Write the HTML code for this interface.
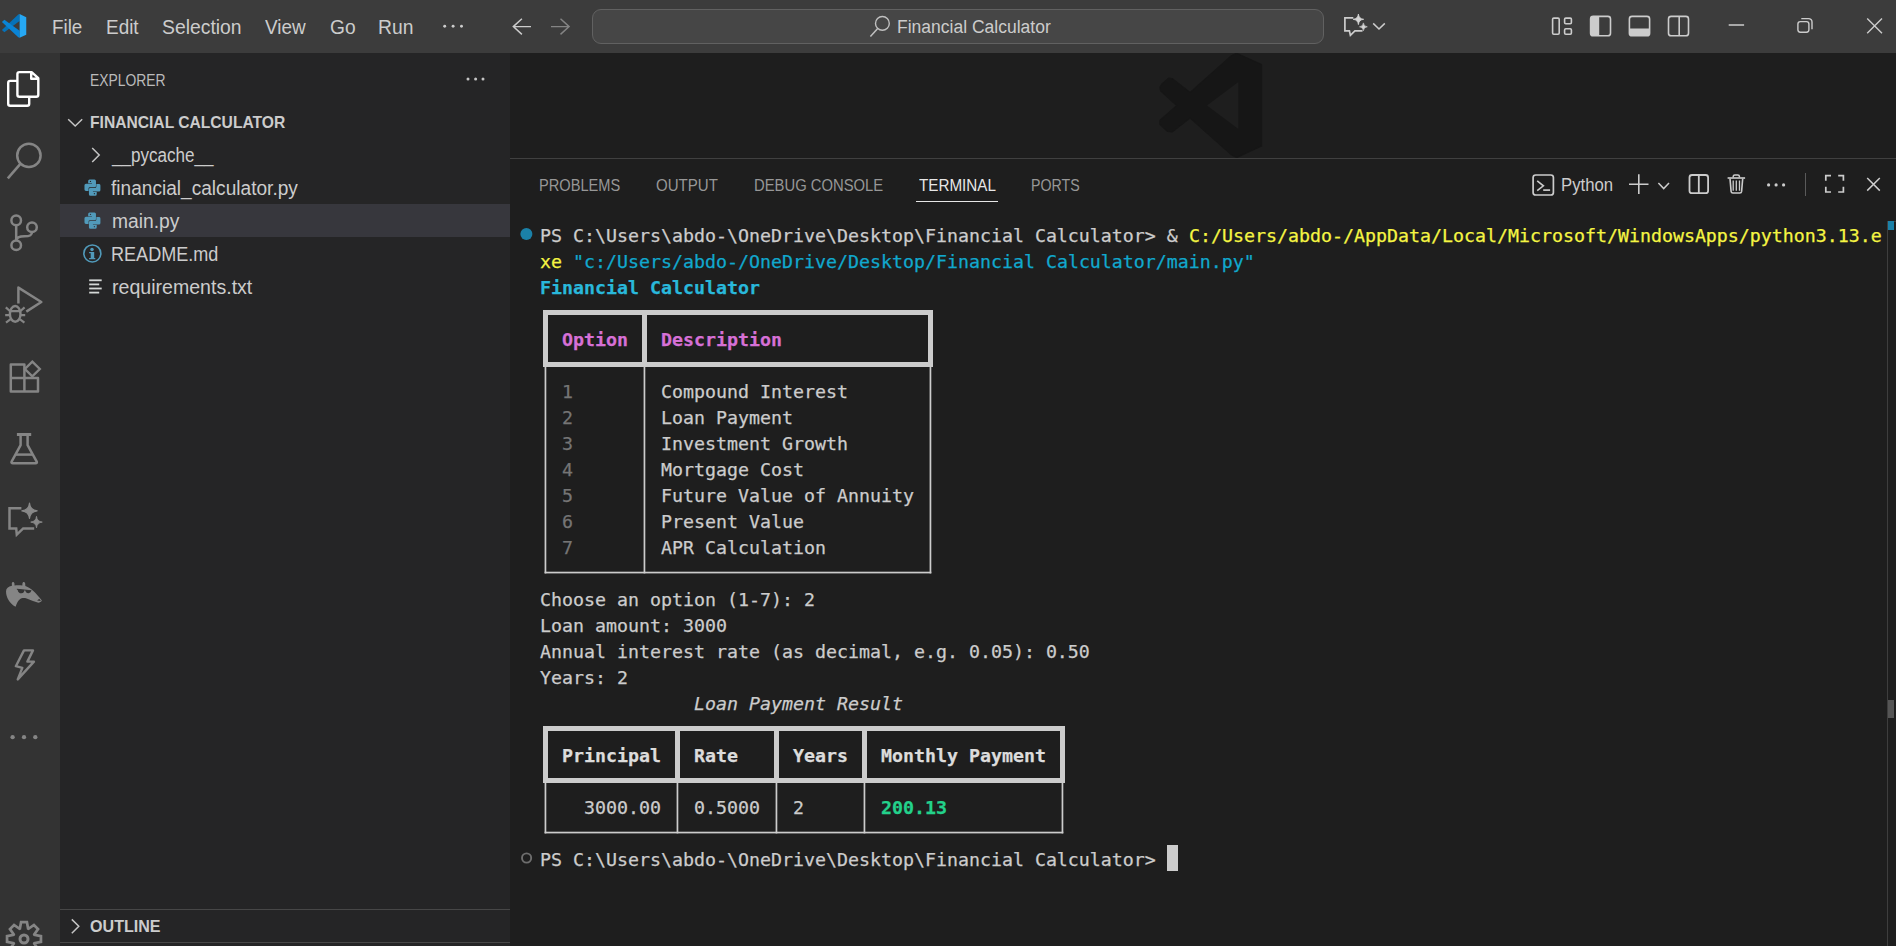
<!DOCTYPE html>
<html lang="en"><head><meta charset="utf-8"><title>Financial Calculator - Visual Studio Code</title>
<style>
html,body{margin:0;padding:0}
body{width:1896px;height:946px;overflow:hidden;position:relative;background:#1e1e1e;font-family:"Liberation Sans", "DejaVu Sans", sans-serif;}
.abs{position:absolute}
.t{position:absolute;white-space:pre;line-height:1;font-family:"Liberation Sans", "DejaVu Sans", sans-serif;transform-origin:0 0;}
.m{position:absolute;white-space:pre;height:26px;line-height:26px;font-family:"DejaVu Sans Mono", "Liberation Mono", monospace;font-size:18.27px;letter-spacing:0.0005px;-webkit-text-stroke:0.25px;}
#titlebar{left:0;top:0;width:1896px;height:53px;background:#3c3c3c}
#activity{left:0;top:53px;width:60px;height:893px;background:#333333}
#sidebar{left:60px;top:53px;width:450px;height:893px;background:#252526}
#editor{left:510px;top:53px;width:1386px;height:105px;background:#1e1e1e}
#panel{left:510px;top:158px;width:1386px;height:788px;background:#1e1e1e;border-top:1px solid #404040;box-sizing:border-box}
#cmd{left:592px;top:9px;width:732px;height:35px;box-sizing:border-box;border:1px solid #616161;border-radius:9px;background:#464646}
#selrow{left:60px;top:204px;width:450px;height:33px;background:#37373d}
svg{position:absolute;left:0;top:0;overflow:visible}

</style></head><body>
<div class="abs" id="titlebar"></div>
<div class="abs" id="activity"></div>
<div class="abs" id="sidebar"></div>
<div class="abs" id="editor"></div>
<div class="abs" id="panel"></div>
<div class="abs" id="cmd"></div>
<div class="abs" id="selrow"></div>
<div class="abs" style="left:60px;top:909px;width:450px;height:1px;background:#474747"></div>
<div class="abs" style="left:60px;top:942px;width:450px;height:1px;background:#474747"></div>
<div class="abs" style="left:916px;top:200.5px;width:82px;height:1.5px;background:#e7e7e7"></div>
<div class="abs" style="left:1805px;top:173px;width:1px;height:23px;background:#5a5a5a"></div>
<div class="abs" style="left:1887px;top:221px;width:1px;height:725px;background:#3e3e3e"></div>
<div class="abs" style="left:1888px;top:221px;width:6px;height:9px;background:#1b81a8"></div>
<div class="abs" style="left:1894px;top:221px;width:2px;height:1px;background:#3e3e3e"></div>
<div class="abs" style="left:1888px;top:700px;width:6px;height:18px;background:#555555"></div>
<div class="abs" style="left:1167px;top:845px;width:11px;height:26px;background:#cccccc"></div>
<svg width="1896" height="946" viewBox="0 0 1896 946" fill="none" stroke-linecap="butt" stroke-linejoin="miter">
<clipPath id="edclip"><rect x="510" y="53" width="1386" height="105"/></clipPath>
<g clip-path="url(#edclip)"><path d="M1236.6 53.3 L1261.6 64.5 L1261.6 145.9 L1236.6 157.6 L1231.4 154.7 L1190.1 118.0 L1172.1 132.0 L1167.4 131.4 L1159.9 124.4 L1159.9 120.9 L1160.5 119.8 L1176.7 105.6 L1160.5 90.7 L1159.9 87.2 L1161.6 84.3 L1168.6 78.1 L1172.1 78.5 L1190.1 92.4 L1231.4 55.8Z" fill="#161616" stroke="#161616" stroke-width="1.2" stroke-linejoin="round"/><path d="M1207.0 105.6 L1238.4 82.0 L1238.4 129.1Z" fill="#1e1e1e"/></g>
<polygon points="1.90,29.99 4.38,32.16 19.60,20.94 19.60,14.09 18.26,14.47" fill="#0672b9"/>
<polygon points="1.90,21.89 4.38,19.80 19.60,30.83 19.60,37.87 18.26,37.30" fill="#0a84d6"/>
<polygon points="19.60,14.09 26.26,17.13 26.26,34.64 19.60,37.87" fill="#26a8f4"/>
<circle cx="444.7" cy="26.2" r="1.45" fill="#cccccc"/>
<circle cx="453.1" cy="26.2" r="1.45" fill="#cccccc"/>
<circle cx="461.5" cy="26.2" r="1.45" fill="#cccccc"/>
<path d="M531 26.6H513.90 M521.90 18.8L513.30 26.6L521.90 34.4" stroke="#cccccc" stroke-width="1.45"/>
<path d="M551 26.6H568.50 M560.50 18.8L569.10 26.6L560.50 34.4" stroke="#848484" stroke-width="1.45"/>
<circle cx="882.4" cy="23.4" r="6.9" stroke="#c0c0c0" stroke-width="1.4"/>
<path d="M877.7 28.6L870.4 36.6" stroke="#c0c0c0" stroke-width="1.5"/>
<path d="M1353.3 17.9H1344.9V30.9H1349.4L1350.4 35.3L1354.9 30.9H1362.5" stroke="#cccccc" stroke-width="1.7" stroke-linejoin="miter"/>
<path d="M1358.4 14.00 Q1358.88 18.82 1363.70 19.3 Q1358.88 19.78 1358.4 24.60 Q1357.92 19.78 1353.10 19.3 Q1357.92 18.82 1358.4 14.00Z" fill="#d4d4d4" stroke="#d4d4d4" stroke-width="0.80" stroke-linejoin="round"/>
<path d="M1363.4 22.89 Q1363.75 26.45 1367.31 26.8 Q1363.75 27.15 1363.4 30.71 Q1363.05 27.15 1359.49 26.8 Q1363.05 26.45 1363.4 22.89Z" fill="#d4d4d4" stroke="#d4d4d4" stroke-width="0.59" stroke-linejoin="round"/>
<path d="M1373.2 23.4L1379 29L1384.8 23.4" stroke="#cccccc" stroke-width="1.5"/>
<rect x="1552.6" y="18.1" width="6.6" height="16.2" rx="1.2" stroke="#cccccc" stroke-width="1.6"/>
<rect x="1564.6" y="18.1" width="6.8" height="5.6" rx="1.2" stroke="#cccccc" stroke-width="1.6"/>
<rect x="1564.6" y="28.7" width="6.8" height="5.6" rx="1.2" stroke="#cccccc" stroke-width="1.6"/>
<rect x="1590.6" y="16.4" width="19.9" height="19.4" rx="2.6" stroke="#cccccc" stroke-width="1.6"/>
<path d="M1593 16.4H1599.2V35.8H1593A2.4 2.4 0 0 1 1590.6 33.4V18.8A2.4 2.4 0 0 1 1593 16.4Z" fill="#cccccc"/>
<rect x="1629.4" y="16.4" width="20.2" height="19.4" rx="2.6" stroke="#cccccc" stroke-width="1.6"/>
<path d="M1629.4 28.6H1649.6V33.4A2.4 2.4 0 0 1 1647.2 35.8H1631.8A2.4 2.4 0 0 1 1629.4 33.4Z" fill="#cccccc"/>
<rect x="1668.5" y="16.4" width="20" height="19.4" rx="2.6" stroke="#cccccc" stroke-width="1.6"/>
<path d="M1679.2 16.4V35.8" stroke="#cccccc" stroke-width="1.6"/>
<path d="M1728.7 25H1744.1" stroke="#cccccc" stroke-width="1.5"/>
<rect x="1797.9" y="21.6" width="11" height="10.6" rx="2.4" stroke="#cccccc" stroke-width="1.4"/>
<path d="M1801.3 18.6H1808.6A3.4 3.4 0 0 1 1812 22V29.2" stroke="#cccccc" stroke-width="1.4"/>
<path d="M1867.2 18.4L1882 33.2M1882 18.4L1867.2 33.2" stroke="#cccccc" stroke-width="1.4"/>
<path d="M31.6 72.1H19.4A2 2 0 0 0 17.4 74.1V94.8A2 2 0 0 0 19.4 96.8H36.3A2 2 0 0 0 38.3 94.8V78.2Z M31.2 72.1V78.7H38.3" stroke="#ffffff" stroke-width="2.4" stroke-linejoin="round"/>
<path d="M17.4 80.9H10.2A2 2 0 0 0 8.2 82.9V103.8A2 2 0 0 0 10.2 105.8H27.2A2 2 0 0 0 29.2 103.8V96.8" stroke="#ffffff" stroke-width="2.4"/>
<circle cx="28.9" cy="155.4" r="11.7" stroke="#858585" stroke-width="2.5"/>
<path d="M20.6 163.6L7.8 178.4" stroke="#858585" stroke-width="2.6"/>
<circle cx="16.2" cy="220.4" r="4.8" stroke="#858585" stroke-width="2.5"/>
<circle cx="16.2" cy="245.2" r="4.8" stroke="#858585" stroke-width="2.5"/>
<circle cx="32" cy="227.2" r="4.8" stroke="#858585" stroke-width="2.5"/>
<path d="M16.2 225.2V240.4 M32 232C32 235.6 29.4 236.3 24.5 236.3C19 236.3 16.6 237.6 16.2 240.6" stroke="#858585" stroke-width="2.5"/>
<path d="M18.4 303.6V287.6L41.3 302L26.3 311.6" stroke="#858585" stroke-width="2.5" stroke-linejoin="round"/>
<ellipse cx="15.2" cy="313.9" rx="5.3" ry="7.9" stroke="#858585" stroke-width="2.4"/>
<path d="M10 311.2H20.4 M9.9 311L5.8 307.4 M20.5 311L24.6 307.4 M9.6 315.2H5.2 M20.8 315.2H25.2 M10.6 319.2L6 322.6 M19.8 319.2L24.4 322.6" stroke="#858585" stroke-width="2.2"/>
<path d="M24.4 378V364.5H10.8V391.4H38V378H10.8 M24.4 378V391.4" stroke="#858585" stroke-width="2.5" stroke-linejoin="round"/>
<path d="M32.3 361.6L39.8 369L32.3 376.4L24.9 369Z" stroke="#858585" stroke-width="2.4" stroke-linejoin="miter"/>
<path d="M16.9 434.5H31.2" stroke="#858585" stroke-width="3"/>
<path d="M20.6 435V445.2L11.6 461.6Q11 463.2 12.8 463.2H35.6Q37.4 463.2 36.7 461.6L27.6 445.2V435" stroke="#858585" stroke-width="2.5" stroke-linejoin="round"/>
<path d="M15.8 454.6H32.4" stroke="#858585" stroke-width="2.5"/>
<path d="M21.4 508.2H9.5V528.4H16.2L16.8 534.6L23.2 528.4H34.2" stroke="#858585" stroke-width="2.5" stroke-linejoin="miter"/>
<path d="M29.5 503.08 Q30.19 510.11 37.22 510.8 Q30.19 511.49 29.5 518.52 Q28.81 511.49 21.78 510.8 Q28.81 510.11 29.5 503.08Z" fill="#888888" stroke="#888888" stroke-width="1.16" stroke-linejoin="round"/>
<path d="M36.5 516.33 Q37.02 521.58 42.27 522.1 Q37.02 522.62 36.5 527.87 Q35.98 522.62 30.73 522.1 Q35.98 521.58 36.5 516.33Z" fill="#888888" stroke="#888888" stroke-width="0.87" stroke-linejoin="round"/>
<path d="M6.02 591.54 C6.02 588.36 8.24 586.46 11.92 585.83 L11.79 583.61 C11.79 581.52 14.33 581.52 14.46 583.61 L14.58 585.51 C17.12 585.19 19.66 585.19 22.32 585.57 L22.45 583.61 C22.45 581.52 24.98 581.52 25.17 583.61 L25.36 585.95 C29.80 587.10 36.14 592.80 41.85 600.41 C41.22 601.68 39.63 602.63 38.36 602.63 L32.97 601.05 L26.63 598.51 C24.10 597.88 21.56 597.88 19.66 599.46 C17.76 601.05 16.80 603.58 15.54 606.75 C9.51 603.58 6.02 597.24 6.02 591.54Z" fill="#858585"/>
<path d="M16.87 588.87 L31.33 590.14 L31.33 591.03 L16.87 589.76 Z" fill="#333333"/>
<path d="M17.63 589.38 C17.88 592.80 20.29 593.56 21.56 593.31 C23.59 592.93 24.35 591.54 24.35 589.89 Z" fill="#333333"/>
<path d="M25.24 590.01 C25.49 592.49 27.27 593.44 28.54 593.18 C30.31 592.80 31.07 591.85 31.20 590.52 Z" fill="#333333"/>
<path d="M37.10 600.41 L39.32 598.83 L40.90 601.05 Z" fill="#333333"/>
<path d="M23.97 650.35 L32.97 650.35 L27.39 661.63 L33.93 661.63 L17.76 679.39 L22.32 667.85 L15.85 666.20Z" stroke="#858585" stroke-width="2.4" stroke-linejoin="round"/>
<circle cx="12.6" cy="737.2" r="2.15" fill="#858585"/>
<circle cx="24" cy="737.2" r="2.15" fill="#858585"/>
<circle cx="35.3" cy="737.2" r="2.15" fill="#858585"/>
<path d="M21.09 922.05 L26.91 922.05 L28.08 928.57 L28.49 928.74 L33.93 924.96 L38.04 929.07 L34.26 934.51 L34.43 934.92 L40.95 936.09 L40.95 941.91 L34.43 943.08 L34.26 943.49 L38.04 948.93 L33.93 953.04 L28.49 949.26 L28.08 949.43 L26.91 955.95 L21.09 955.95 L19.92 949.43 L19.51 949.26 L14.07 953.04 L9.96 948.93 L13.74 943.49 L13.57 943.08 L7.05 941.91 L7.05 936.09 L13.57 934.92 L13.74 934.51 L9.96 929.07 L14.07 924.96 L19.51 928.74 L19.92 928.57Z" stroke="#858585" stroke-width="2.7" stroke-linejoin="miter"/>
<circle cx="24" cy="939" r="4" stroke="#858585" stroke-width="3"/>
<circle cx="468.0" cy="79" r="1.5" fill="#c5c5c5"/>
<circle cx="475.6" cy="79" r="1.5" fill="#c5c5c5"/>
<circle cx="483.0" cy="79" r="1.5" fill="#c5c5c5"/>
<path d="M68.2 119.2L75.2 126L82.2 119.2" stroke="#c5c5c5" stroke-width="1.5"/>
<path d="M92.2 148L99.2 155L92.2 162" stroke="#c5c5c5" stroke-width="1.5"/>
<path d="M71.8 919.4L78.8 926.3L71.8 933.2" stroke="#c5c5c5" stroke-width="1.5"/>
<g transform="translate(78 172) scale(0.03175)"><path d="M320 285Q320 235 368 235L518 235Q566 235 566 285L566 438Q566 482 522 482L372 482Q332 482 332 522L332 602L252 602Q204 602 204 555L204 418Q204 370 252 370L440 370L440 352L320 352Z" fill="#519aba"/><circle cx="393" cy="298" r="20" fill="#252526"/><g transform="rotate(180 455 491)"><path d="M320 285Q320 235 368 235L518 235Q566 235 566 285L566 438Q566 482 522 482L372 482Q332 482 332 522L332 602L252 602Q204 602 204 555L204 418Q204 370 252 370L440 370L440 352L320 352Z" fill="#519aba"/><circle cx="393" cy="298" r="20" fill="#252526"/></g></g>
<g transform="translate(78 205) scale(0.03175)"><path d="M320 285Q320 235 368 235L518 235Q566 235 566 285L566 438Q566 482 522 482L372 482Q332 482 332 522L332 602L252 602Q204 602 204 555L204 418Q204 370 252 370L440 370L440 352L320 352Z" fill="#519aba"/><circle cx="393" cy="298" r="20" fill="#37373d"/><g transform="rotate(180 455 491)"><path d="M320 285Q320 235 368 235L518 235Q566 235 566 285L566 438Q566 482 522 482L372 482Q332 482 332 522L332 602L252 602Q204 602 204 555L204 418Q204 370 252 370L440 370L440 352L320 352Z" fill="#519aba"/><circle cx="393" cy="298" r="20" fill="#37373d"/></g></g>
<circle cx="92.35" cy="253.45" r="8.5" stroke="#519aba" stroke-width="1.6"/>
<circle cx="92" cy="249.4" r="1.75" fill="#519aba"/>
<path d="M89.1 252.1H94.2V258H95.3V259.3H89.1V258H90.7V253.2H89.1Z" fill="#519aba"/>
<rect x="89.2" y="279.40000000000003" width="12.5" height="1.8" fill="#d4d7d6"/>
<rect x="89.2" y="283.5" width="10" height="1.8" fill="#d4d7d6"/>
<rect x="89.2" y="287.6" width="12.5" height="1.8" fill="#d4d7d6"/>
<rect x="89.2" y="291.70000000000005" width="10" height="1.8" fill="#d4d7d6"/>
<rect x="1533.1" y="175" width="20.3" height="20" rx="2.6" stroke="#cccccc" stroke-width="1.7"/>
<path d="M1537.2 180.8L1543.4 185.8L1537.2 190.7" stroke="#cccccc" stroke-width="1.6"/>
<path d="M1543.2 190.1H1550.1" stroke="#cccccc" stroke-width="1.7"/>
<path d="M1629 184.2H1648.5M1638.8 174.3V194" stroke="#cccccc" stroke-width="1.6"/>
<path d="M1658.4 183L1663.7 188.6L1669 183" stroke="#cccccc" stroke-width="1.5"/>
<rect x="1689.5" y="175" width="18.6" height="18.2" rx="2.5" stroke="#cccccc" stroke-width="1.8"/>
<path d="M1698.8 175V193.2" stroke="#cccccc" stroke-width="1.8"/>
<path d="M1727.6 178H1745.1" stroke="#cccccc" stroke-width="1.6"/>
<path d="M1733.2 177.6V176.4A1.6 1.6 0 0 1 1734.8 174.9H1737.8A1.6 1.6 0 0 1 1739.4 176.4V177.6" stroke="#cccccc" stroke-width="1.5"/>
<path d="M1730 178.6L1731.1 191.4A1.8 1.8 0 0 0 1732.9 193H1739.8A1.8 1.8 0 0 0 1741.6 191.4L1742.7 178.6" stroke="#cccccc" stroke-width="1.6"/>
<path d="M1733.2 180.4V190.8M1736.3 180.4V190.8M1739.5 180.4V190.8" stroke="#cccccc" stroke-width="1.3"/>
<circle cx="1768.6" cy="184.9" r="1.6" fill="#cccccc"/>
<circle cx="1776.1" cy="184.9" r="1.6" fill="#cccccc"/>
<circle cx="1783.6" cy="184.9" r="1.6" fill="#cccccc"/>
<path d="M1825.8 180.79999999999998V175.6H1831.0 M1838.2 175.6H1843.4V180.79999999999998 M1843.4 186.8V192H1838.2 M1831.0 192H1825.8V186.8" stroke="#cccccc" stroke-width="1.7"/>
<path d="M1867.2 178L1879.8 190.6M1879.8 178L1867.2 190.6" stroke="#cccccc" stroke-width="1.5"/>
<circle cx="526.4" cy="234" r="6" fill="#1b81a8"/>
<circle cx="526.6" cy="858" r="4.6" stroke="#6e6e6e" stroke-width="1.9"/>
</svg>
<svg width="1896" height="946" viewBox="0 0 1896 946">
<rect x="543.00" y="310.00" width="390.00" height="5.00" fill="#cccccc"/>
<rect x="543.00" y="362.00" width="390.00" height="5.00" fill="#cccccc"/>
<rect x="543.00" y="310.00" width="5.00" height="57.00" fill="#cccccc"/>
<rect x="642.00" y="310.00" width="5.00" height="57.00" fill="#cccccc"/>
<rect x="928.00" y="310.00" width="5.00" height="57.00" fill="#cccccc"/>
<rect x="544.60" y="367.00" width="1.70" height="206.40" fill="#cccccc"/>
<rect x="643.60" y="367.00" width="1.70" height="206.40" fill="#cccccc"/>
<rect x="929.60" y="367.00" width="1.70" height="206.40" fill="#cccccc"/>
<rect x="544.60" y="571.70" width="386.70" height="1.70" fill="#cccccc"/>
<rect x="543.00" y="726.00" width="522.00" height="5.00" fill="#cccccc"/>
<rect x="543.00" y="778.00" width="522.00" height="5.00" fill="#cccccc"/>
<rect x="543.00" y="726.00" width="5.00" height="57.00" fill="#cccccc"/>
<rect x="675.00" y="726.00" width="5.00" height="57.00" fill="#cccccc"/>
<rect x="774.00" y="726.00" width="5.00" height="57.00" fill="#cccccc"/>
<rect x="862.00" y="726.00" width="5.00" height="57.00" fill="#cccccc"/>
<rect x="1060.00" y="726.00" width="5.00" height="57.00" fill="#cccccc"/>
<rect x="544.60" y="783.00" width="1.70" height="50.40" fill="#cccccc"/>
<rect x="676.60" y="783.00" width="1.70" height="50.40" fill="#cccccc"/>
<rect x="775.60" y="783.00" width="1.70" height="50.40" fill="#cccccc"/>
<rect x="863.60" y="783.00" width="1.70" height="50.40" fill="#cccccc"/>
<rect x="1061.60" y="783.00" width="1.70" height="50.40" fill="#cccccc"/>
<rect x="544.60" y="831.70" width="518.70" height="1.70" fill="#cccccc"/>
</svg>
<div class="t" id="m_file" style="left:51.72px;top:18px;font-size:19.5px;font-weight:400;transform:scaleX(0.9653);color:#cccccc">File</div>
<div class="t" id="m_edit" style="left:105.80px;top:18px;font-size:19.5px;font-weight:400;transform:scaleX(0.9707);color:#cccccc">Edit</div>
<div class="t" id="m_sel" style="left:161.52px;top:18px;font-size:19.5px;font-weight:400;transform:scaleX(0.9924);color:#cccccc">Selection</div>
<div class="t" id="m_view" style="left:265.01px;top:18px;font-size:19.5px;font-weight:400;transform:scaleX(0.9701);color:#cccccc">View</div>
<div class="t" id="m_go" style="left:329.99px;top:18px;font-size:19.5px;font-weight:400;transform:scaleX(0.9823);color:#cccccc">Go</div>
<div class="t" id="m_run" style="left:378.12px;top:18px;font-size:19.5px;font-weight:400;transform:scaleX(0.9897);color:#cccccc">Run</div>
<div class="t" id="cc" style="left:897.25px;top:18px;font-size:18px;font-weight:400;transform:scaleX(0.9728);color:#cccccc">Financial Calculator</div>
<div class="t" id="s_exp" style="left:89.74px;top:72px;font-size:16.5px;font-weight:400;transform:scaleX(0.8407);color:#bbbbbb">EXPLORER</div>
<div class="t" id="s_fc" style="left:90.04px;top:114px;font-size:16.5px;font-weight:700;transform:scaleX(0.9468);color:#cccccc">FINANCIAL CALCULATOR</div>
<div class="t" id="f_pyc" style="left:111.51px;top:146px;font-size:19.5px;font-weight:400;transform:scaleX(0.8757);color:#cccccc">__pycache__</div>
<div class="t" id="f_fin" style="left:110.87px;top:179px;font-size:19.5px;font-weight:400;transform:scaleX(0.9794);color:#cccccc">financial_calculator.py</div>
<div class="t" id="f_main" style="left:111.72px;top:212px;font-size:19.5px;font-weight:400;transform:scaleX(0.9881);color:#cccccc">main.py</div>
<div class="t" id="f_read" style="left:110.85px;top:245px;font-size:19.5px;font-weight:400;transform:scaleX(0.9264);color:#cccccc">README.md</div>
<div class="t" id="f_req" style="left:111.57px;top:278px;font-size:19.5px;font-weight:400;transform:scaleX(1.0036);color:#cccccc">requirements.txt</div>
<div class="t" id="s_out" style="left:90.14px;top:918px;font-size:16.5px;font-weight:700;transform:scaleX(0.9750);color:#cccccc">OUTLINE</div>
<div class="t" id="p_prob" style="left:538.78px;top:177px;font-size:16.5px;font-weight:400;transform:scaleX(0.8867);color:#979797">PROBLEMS</div>
<div class="t" id="p_out" style="left:656.27px;top:177px;font-size:16.5px;font-weight:400;transform:scaleX(0.9118);color:#979797">OUTPUT</div>
<div class="t" id="p_dbg" style="left:753.93px;top:177px;font-size:16.5px;font-weight:400;transform:scaleX(0.8977);color:#979797">DEBUG CONSOLE</div>
<div class="t" id="p_term" style="left:919.22px;top:177px;font-size:16.5px;font-weight:400;transform:scaleX(0.9219);color:#e7e7e7">TERMINAL</div>
<div class="t" id="p_ports" style="left:1030.94px;top:177px;font-size:16.5px;font-weight:400;transform:scaleX(0.8594);color:#979797">PORTS</div>
<div class="t" id="p_py" style="left:1560.62px;top:176px;font-size:18px;font-weight:400;transform:scaleX(0.9308);color:#cccccc">Python</div>
<div class="m" style="left:540px;top:222.80px;color:#cccccc;">PS C:\Users\abdo-\OneDrive\Desktop\Financial Calculator&gt; &amp; </div>
<div class="m" style="left:1189px;top:222.80px;color:#f5f543;">C:/Users/abdo-/AppData/Local/Microsoft/WindowsApps/python3.13.e</div>
<div class="m" style="left:540px;top:248.80px;color:#f5f543;">xe</div>
<div class="m" style="left:573px;top:248.80px;color:#11a8cd;">&quot;c:/Users/abdo-/OneDrive/Desktop/Financial Calculator/main.py&quot;</div>
<div class="m" style="left:540px;top:274.80px;color:#29b8db;font-weight:700;">Financial Calculator</div>
<div class="m" style="left:562px;top:326.80px;color:#d670d6;font-weight:700;">Option</div>
<div class="m" style="left:661px;top:326.80px;color:#d670d6;font-weight:700;">Description</div>
<div class="m" style="left:562px;top:378.80px;color:#757575;">1</div>
<div class="m" style="left:661px;top:378.80px;color:#cccccc;">Compound Interest</div>
<div class="m" style="left:562px;top:404.80px;color:#757575;">2</div>
<div class="m" style="left:661px;top:404.80px;color:#cccccc;">Loan Payment</div>
<div class="m" style="left:562px;top:430.80px;color:#757575;">3</div>
<div class="m" style="left:661px;top:430.80px;color:#cccccc;">Investment Growth</div>
<div class="m" style="left:562px;top:456.80px;color:#757575;">4</div>
<div class="m" style="left:661px;top:456.80px;color:#cccccc;">Mortgage Cost</div>
<div class="m" style="left:562px;top:482.80px;color:#757575;">5</div>
<div class="m" style="left:661px;top:482.80px;color:#cccccc;">Future Value of Annuity</div>
<div class="m" style="left:562px;top:508.80px;color:#757575;">6</div>
<div class="m" style="left:661px;top:508.80px;color:#cccccc;">Present Value</div>
<div class="m" style="left:562px;top:534.80px;color:#757575;">7</div>
<div class="m" style="left:661px;top:534.80px;color:#cccccc;">APR Calculation</div>
<div class="m" style="left:540px;top:586.80px;color:#cccccc;">Choose an option (1-7): 2</div>
<div class="m" style="left:540px;top:612.80px;color:#cccccc;">Loan amount: 3000</div>
<div class="m" style="left:540px;top:638.80px;color:#cccccc;">Annual interest rate (as decimal, e.g. 0.05): 0.50</div>
<div class="m" style="left:540px;top:664.80px;color:#cccccc;">Years: 2</div>
<div class="m" style="left:694px;top:690.80px;color:#cccccc;font-style:italic;">Loan Payment Result</div>
<div class="m" style="left:562px;top:742.80px;color:#dcdcdc;font-weight:700;">Principal</div>
<div class="m" style="left:694px;top:742.80px;color:#dcdcdc;font-weight:700;">Rate</div>
<div class="m" style="left:793px;top:742.80px;color:#dcdcdc;font-weight:700;">Years</div>
<div class="m" style="left:881px;top:742.80px;color:#dcdcdc;font-weight:700;">Monthly Payment</div>
<div class="m" style="left:584px;top:794.80px;color:#cccccc;">3000.00</div>
<div class="m" style="left:694px;top:794.80px;color:#cccccc;">0.5000</div>
<div class="m" style="left:793px;top:794.80px;color:#cccccc;">2</div>
<div class="m" style="left:881px;top:794.80px;color:#23d18b;font-weight:700;">200.13</div>
<div class="m" style="left:540px;top:846.80px;color:#cccccc;">PS C:\Users\abdo-\OneDrive\Desktop\Financial Calculator&gt; </div>
</body></html>
